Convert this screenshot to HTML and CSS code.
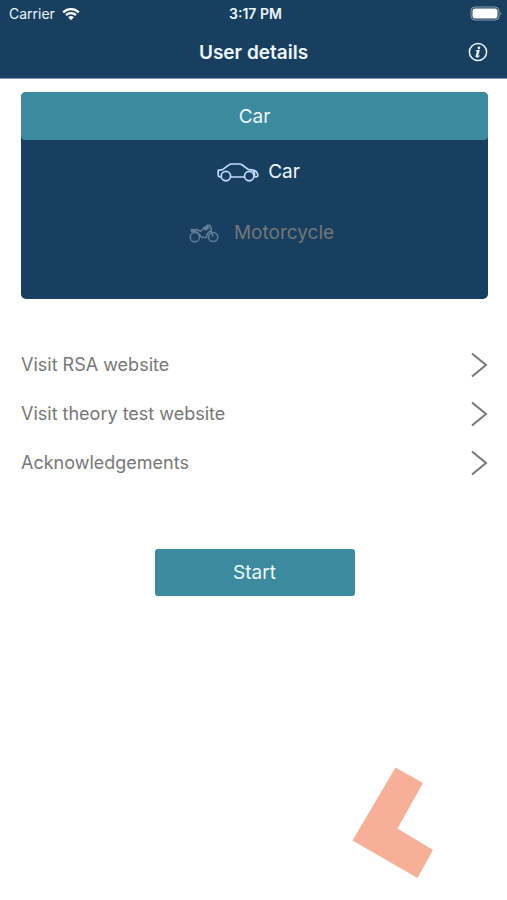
FILE: index.html
```html
<!DOCTYPE html>
<html lang="en">
<head>
<meta charset="utf-8">
<meta name="viewport" content="width=device-width, initial-scale=1">
<title>User details</title>
<link rel="stylesheet" href="styles.css">
</head>
<body>
<header class="top">
  <div class="status">
    <div class="carrier">
      <span>Carrier</span>
      <svg class="wifi" viewBox="0 0 18 14" aria-hidden="true">
        <path class="wave" d="M1.2 5.3A11.3 11.3 0 0 1 16.8 5.3M4 8.2A7.3 7.3 0 0 1 14 8.2"/>
        <path class="dot" d="M6.1 10.2a4.3 4.3 0 0 1 5.8 0L9 13.2z"/>
      </svg>
    </div>
    <span class="time">3:17 PM</span>
    <svg class="battery" viewBox="0 0 32 15" aria-hidden="true">
      <rect class="shell" x="1" y="1" width="28" height="13" rx="4"/>
      <rect class="charge" x="2.5" y="2.5" width="25" height="10" rx="2.5"/>
      <path class="tip" d="M30.5 5.5q1.5 2 0 4z"/>
    </svg>
  </div>
  <div class="nav">
    <h1>User details</h1>
    <button class="info" type="button" aria-label="Information">
      <svg viewBox="0 0 20 20" aria-hidden="true">
        <circle class="ring" cx="10" cy="10" r="8.6"/>
        <circle class="mark" cx="10.9" cy="5.8" r="1.4"/>
        <path class="mark" d="M7.7 8.2l4.2-.4-1.6 5.8q-.1.7.4.5l1.1-.8.3.5c-1.2 1.4-2.4 2-3.4 1.8-1-.1-1.3-.9-1-1.8l1-3.9c.1-.6 0-.8-1-.9z"/>
      </svg>
    </button>
  </div>
</header>
<main>
  <section class="picker">
    <button class="selected" type="button">Car</button>
    <div class="options">
      <button class="option" type="button">
        <svg class="car" viewBox="0 0 42 20" aria-hidden="true">
          <path d="M4 15H3Q1.2 14.8 1.2 13V8.4L5.5 7.6 12.3 2.6Q13 2 14.5 2H22Q23.8 2 25 2.8L31.5 7.6Q37 7.4 39.2 9.6 41 11.5 40.8 13.7 40.6 15 37.5 15M13.5 15H27.5"/>
          <path d="M35.6 8.2Q38.4 10.6 37.2 14.5"/>
          <circle cx="8.9" cy="14.1" r="4.7"/>
          <circle cx="32.2" cy="14.1" r="4.7"/>
        </svg>
        <span>Car</span>
      </button>
      <button class="option muted" type="button">
        <svg class="moto" viewBox="0 0 30 20" aria-hidden="true">
          <circle cx="5.8" cy="14.2" r="4.6"/>
          <circle cx="24.2" cy="14" r="4.6"/>
          <path d="M1.2 6.8L8 6.6 11.5 8.2 15.5 5M2 8.4Q8.5 8 10.8 12.2L13 14.6H17.6Q17.6 10 21.6 7.6M17.5 2.2H20.6L22.4 5.6Q21.6 9 24.2 13.6"/>
          <path class="tank" d="M14.6 5L18 3 19.8 4.8 16.8 6.8z"/>
        </svg>
        <span>Motorcycle</span>
      </button>
    </div>
  </section>
  <nav class="links" aria-label="Links">
    <a href="#rsa"><span>Visit RSA website</span><svg viewBox="0 0 18 26" aria-hidden="true"><path d="M2 1.5L16 13 2 24.5"/></svg></a>
    <a href="#theory"><span>Visit theory test website</span><svg viewBox="0 0 18 26" aria-hidden="true"><path d="M2 1.5L16 13 2 24.5"/></svg></a>
    <a href="#acknowledgements"><span>Acknowledgements</span><svg viewBox="0 0 18 26" aria-hidden="true"><path d="M2 1.5L16 13 2 24.5"/></svg></a>
  </nav>
  <button class="start" type="button">Start</button>
</main>
<footer>
  <svg class="plate" viewBox="0 0 82 112" aria-hidden="true"><path d="M43.5 .5L71 16 45.5 61.5 81 83 65.5 111 .5 73.5z"/></svg>
</footer>
</body>
</html>
```
FILE: styles.css
```css
* {
  box-sizing: border-box;
}

body {
  margin: 0;
  min-height: 100vh;
  display: flex;
  flex-direction: column;
  background: #fff;
  color: #777;
  font-family: Inter, "Liberation Sans", sans-serif;
  font-size: 18px;
}

button {
  border: 0;
  padding: 0;
  background: none;
  color: #edf8ff;
  font: inherit;
}

svg {
  display: block;
  flex: none;
  fill: none;
}

.top {
  background: #183f5f;
  color: #edf8ff;
  padding-bottom: 3px;
  border-bottom: 1px solid #8299aa;
}

.status {
  display: grid;
  grid-template-columns: 1fr auto 1fr;
  align-items: center;
  height: 27px;
  padding: 0 5px 0 9px;
  font-size: 14px;
}

.carrier {
  display: flex;
  align-items: center;
  gap: 7px;
}

.wifi {
  width: 18px;
  height: 14px;
}

.wave {
  stroke: #fff;
  stroke-width: 2.3;
}

.dot,
.charge {
  fill: #fff;
}

.time {
  font-weight: 600;
}

.battery {
  width: 32px;
  height: 15px;
  justify-self: end;
}

.shell {
  stroke: #8ca0b0;
}

.tip {
  fill: #8ca0b0;
}

.nav {
  display: grid;
  grid-template-columns: 1fr auto 1fr;
  align-items: center;
  height: 48px;
  padding: 2px 19px 0;
}

h1 {
  grid-column: 2;
  margin: 0;
  font-size: 19px;
  font-weight: 600;
}

.info {
  justify-self: end;
}

.info svg {
  width: 20px;
  height: 20px;
}

.ring {
  stroke: #edf8ff;
  stroke-width: 1.5;
}

.mark {
  fill: #edf8ff;
}

main {
  display: flex;
  flex-direction: column;
  padding: 13px 19px 0 21px;
}

.picker {
  display: flex;
  flex-direction: column;
  border-radius: 5px;
  overflow: hidden;
  background: #183f5f;
}

.selected {
  height: 48px;
  border-radius: 4px;
  background: #3b8a9e;
  font-size: 19px;
}

.options {
  display: flex;
  flex-direction: column;
  padding: 1px 0 36px;
}

.option {
  display: flex;
  align-items: center;
  justify-content: center;
  gap: 9px;
  height: 61px;
  padding-left: 8px;
  font-size: 19px;
}

.option.muted {
  gap: 15px;
  padding-left: 14px;
  color: #737779;
}

.car {
  width: 42px;
  height: 20px;
  stroke: #c3d9ff;
  stroke-width: 1.7;
  stroke-linejoin: round;
}

.moto {
  width: 30px;
  height: 20px;
  stroke: #627e98;
  stroke-width: 1.5;
  stroke-linejoin: round;
}

.tank {
  fill: #627e98;
}

.links {
  display: flex;
  flex-direction: column;
  padding-top: 41px;
}

.links a {
  display: flex;
  align-items: center;
  justify-content: space-between;
  height: 49px;
  color: inherit;
  text-decoration: none;
}

.links svg {
  width: 18px;
  height: 26px;
  stroke: #777;
  stroke-width: 2;
}

.start {
  align-self: center;
  width: 200px;
  height: 47px;
  margin-top: 62px;
  border-radius: 3px;
  background: #3b8a9e;
  font-size: 19px;
}

footer {
  display: flex;
  justify-content: flex-end;
  margin-top: auto;
  padding: 24px 73px 21px;
}

.plate {
  width: 82px;
  height: 112px;
  fill: #f7b097;
}
```
